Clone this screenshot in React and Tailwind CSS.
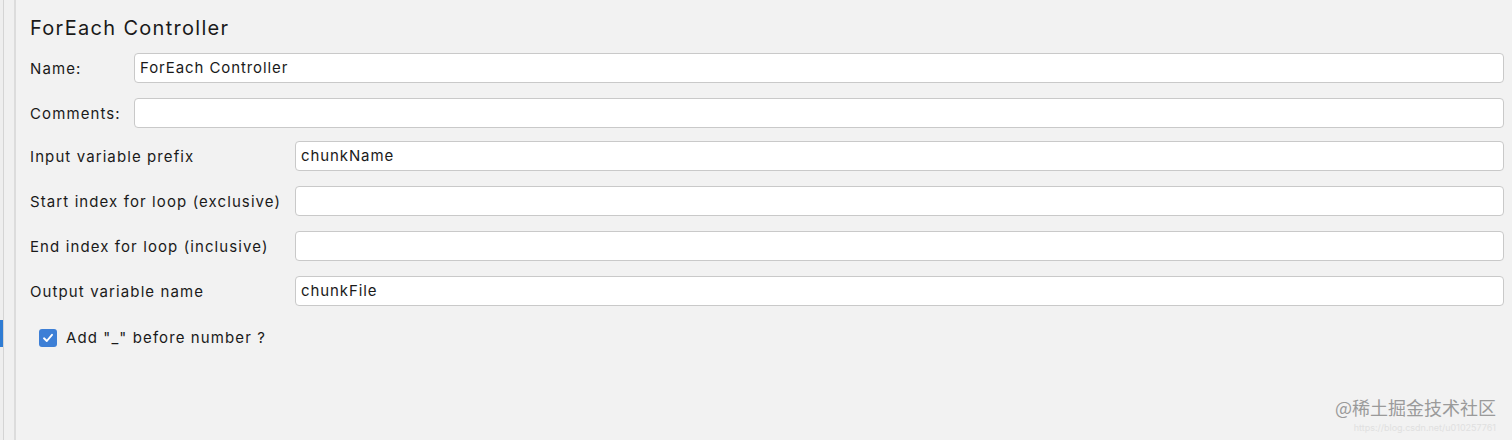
export default function App() {
  const font = { fontFamily: 'Inter, "Noto Sans", "Liberation Sans", sans-serif' };
  const rows = [
    { label: "Input variable prefix", value: "chunkName" },
    { label: "Start index for loop (exclusive)", value: "" },
    { label: "End index for loop (inclusive)", value: "" },
    { label: "Output variable name", value: "chunkFile" },
  ];
  const Input = ({ value, className = "" }) => (
    <div className={"h-[30px] bg-white border border-[#c9c9c9] rounded-[4px] flex items-center px-[5px] pt-[1px] text-[15px] text-[#1a1a1a] tracking-[0.9px] " + className}>
      {value}
    </div>
  );
  return (
    <div className="w-[1512px] h-[440px] bg-[#f2f2f2] flex overflow-hidden relative" style={font}>
      <div className="w-[3px] h-full bg-[#eeeeee] relative">
        <div className="absolute left-0 top-[320px] w-[3px] h-[27px] bg-[#2f7cd3]" />
      </div>
      <div className="w-px h-full bg-[#d4d4d4]" />
      <div className="w-[10px] h-full bg-[#f0f0f0]" />
      <div className="w-[2px] h-full bg-[#dcdcdc]" />
      <div className="flex-1 pl-[14px] pr-[8px]">
        <div className="h-[47px] flex items-end pb-[4px] text-[20px] text-[#1a1a1a] tracking-[1.3px]">ForEach Controller</div>
        <div className="flex items-center h-[30px] mt-[6px]">
          <div className="w-[104px] pt-[2px] text-[15px] text-[#1a1a1a] tracking-[1.1px]">Name:</div>
          <Input value="ForEach Controller" className="flex-1" />
        </div>
        <div className="flex items-center h-[30px] mt-[15px]">
          <div className="w-[104px] pt-[2px] text-[15px] text-[#1a1a1a] tracking-[1.1px]">Comments:</div>
          <Input value="" className="flex-1" />
        </div>
        {rows.map((r, i) => (
          <div key={i} className={"flex items-center h-[30px] " + (i === 0 ? "mt-[13px]" : "mt-[15px]")}>
            <div className="w-[265px] pt-[2px] text-[15px] text-[#1a1a1a] tracking-[1.1px] whitespace-nowrap">{r.label}</div>
            <Input value={r.value} className="flex-1" />
          </div>
        ))}
        <div className="flex items-center mt-[22px] ml-[9px] h-[19px]">
          <div className="w-[18px] h-[18px] rounded-[3px] bg-[#3d7fd6] flex items-center justify-center">
            <svg width="12" height="12" viewBox="0 0 12 12">
              <path d="M2 6.3 L4.8 9 L10 2.8" fill="none" stroke="white" strokeWidth="1.9" strokeLinecap="round" strokeLinejoin="round" />
            </svg>
          </div>
          <div className="ml-[9px] pt-[2px] text-[15px] text-[#1a1a1a] tracking-[1.1px]">Add "_" before number ?</div>
        </div>
      </div>
      <div className="absolute right-[16px] top-[395px] text-[18px] text-[#9a9a9a] leading-[24px]" style={{ fontFamily: '"Noto Sans CJK SC", sans-serif' }}>@稀土掘金技术社区</div>
      <div className="absolute right-[16px] top-[423px] text-[9px] text-[#e0e0e0] leading-[10px]">https://blog.csdn.net/u010257761</div>
    </div>
  );
}
